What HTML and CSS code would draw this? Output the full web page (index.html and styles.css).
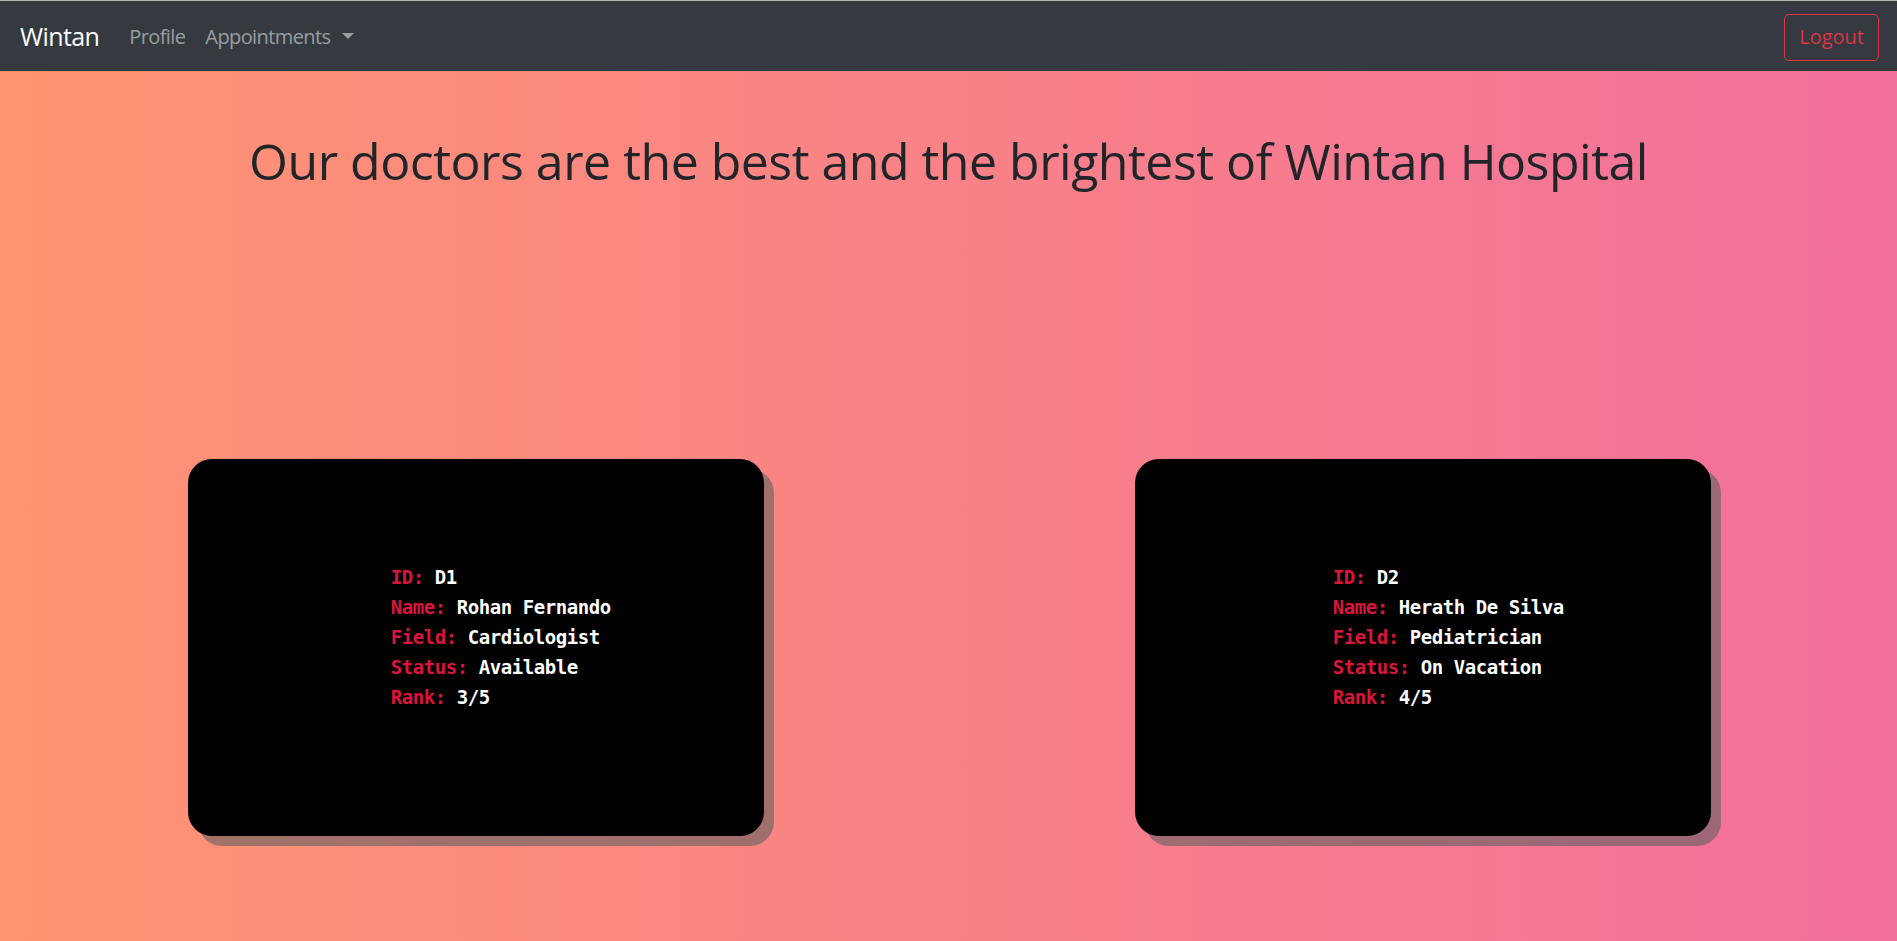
FILE: index.html
```html
<!DOCTYPE html>
<html lang="en">
<head>
<meta charset="utf-8">
<title>Wintan Hospital</title>
<link rel="stylesheet" href="styles.css">
</head>
<body>
<nav class="navbar">
  <div class="nav-left">
    <a class="brand" href="#">Wintan</a>
    <a class="nav-link" href="#">Profile</a>
    <a class="nav-link dropdown-toggle" href="#">Appointments</a>
  </div>
  <button class="btn-logout" type="button">Logout</button>
</nav>
<main class="main">
  <h1 class="title">Our doctors are the best and the brightest of Wintan Hospital</h1>
  <section class="cards">
    <div class="col">
      <div class="card">
        <div class="info">
          <div class="row"><span class="label">ID:</span> <span class="value">D1</span></div>
          <div class="row"><span class="label">Name:</span> <span class="value">Rohan Fernando</span></div>
          <div class="row"><span class="label">Field:</span> <span class="value">Cardiologist</span></div>
          <div class="row"><span class="label">Status:</span> <span class="value">Available</span></div>
          <div class="row"><span class="label">Rank:</span> <span class="value">3/5</span></div>
        </div>
      </div>
    </div>
    <div class="col">
      <div class="card">
        <div class="info">
          <div class="row"><span class="label">ID:</span> <span class="value">D2</span></div>
          <div class="row"><span class="label">Name:</span> <span class="value">Herath De Silva</span></div>
          <div class="row"><span class="label">Field:</span> <span class="value">Pediatrician</span></div>
          <div class="row"><span class="label">Status:</span> <span class="value">On Vacation</span></div>
          <div class="row"><span class="label">Rank:</span> <span class="value">4/5</span></div>
        </div>
      </div>
    </div>
  </section>
</main>
</body>
</html>
```
FILE: styles.css
```css
* { box-sizing: border-box; }
html, body { margin: 0; padding: 0; }
body {
  min-height: 100vh;
  font-family: "Open Sans", "Noto Sans", sans-serif;
  font-size: 20px;
  color: #212529;
  background: linear-gradient(to right, #ff9472, #f2709c);
  overflow: hidden;
}
.navbar {
  height: 71px;
  border-top: 1px solid #b4b4b4;
  background: #343a40;
  display: flex;
  align-items: center;
  justify-content: space-between;
  padding: 2px 18px 0 20px;
}
.nav-left { display: flex; align-items: center; }
.brand {
  color: #fff;
  text-decoration: none;
  font-size: 25px;
  letter-spacing: -0.6px;
  line-height: 1.5;
  margin-right: 20px;
}
.nav-link {
  color: rgba(255,255,255,.5);
  text-decoration: none;
  font-size: 20px;
  letter-spacing: -0.6px;
  line-height: 1.5;
  padding: 0 10px;
}
.dropdown-toggle::after {
  content: "";
  display: inline-block;
  margin-left: 12px;
  vertical-align: 5px;
  border-top: 6px solid;
  border-left: 6px solid transparent;
  border-right: 6px solid transparent;
}
.btn-logout {
  font-family: inherit;
  font-size: 20px;
  line-height: 30px;
  padding: 7.5px 14px;
  color: #dc3545;
  background: transparent;
  border: 1px solid #dc3545;
  border-radius: 5px;
}
.main { display: flex; flex-direction: column; }
.title {
  margin: 60px 0 0;
  font-size: 50px;
  line-height: 60px;
  font-weight: 400;
  letter-spacing: -0.5px;
  text-align: center;
  color: #212529;
}
.cards {
  display: grid;
  grid-template-columns: 1fr 1fr;
  margin-top: 268px;
  padding-left: 2px;
}
.col { display: flex; justify-content: center; }
.card {
  width: 576px;
  height: 377px;
  background: #000;
  border-radius: 24px;
  box-shadow: 10px 10px 0 rgba(96,96,96,.59);
  display: flex;
  justify-content: center;
  align-items: flex-start;
  padding: 103px 0 0 50px;
}
.info {
  font-family: "DejaVu Sans Mono", "Liberation Mono", monospace;
  font-weight: bold;
  font-size: 19px;
  letter-spacing: -0.45px;
  line-height: 30px;
}
.label { color: #dc143c; }
.value { color: #fff; }
```
